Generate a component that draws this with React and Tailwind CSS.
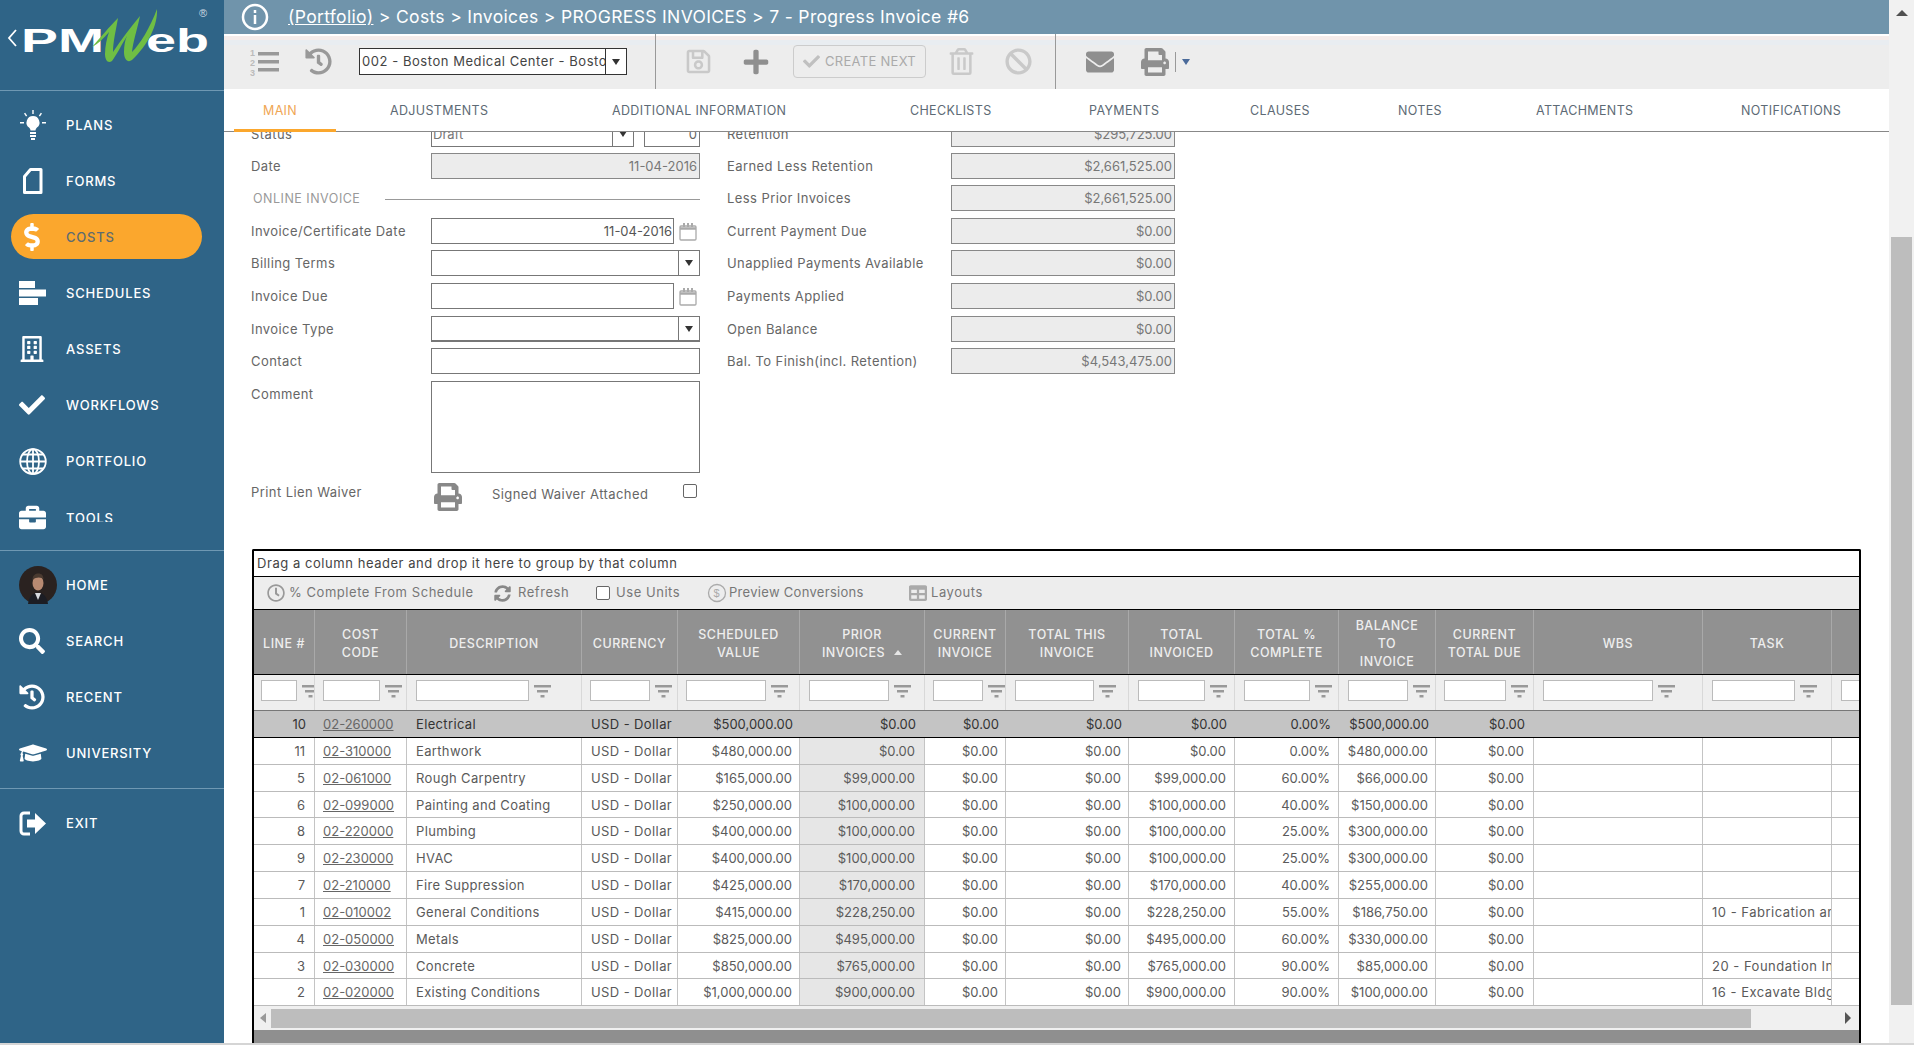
import {
  FaRegBuilding, FaCheck, FaBriefcase, FaSearch, FaHistory, FaGraduationCap, FaPrint, FaEnvelope,
  FaRegSave, FaPlus, FaRegTrashAlt, FaBan, FaRegClock, FaSyncAlt, FaTable, FaDollarSign,
} from 'react-icons/fa'

const COLS = 'grid grid-cols-[61px_92px_175px_96px_122px_125px_81px_123px_106px_104px_97px_98px_169px_129px_29px]'

const NAV = [
  { label: 'PLANS', icon: <Bulb /> },
  { label: 'FORMS', icon: <FormIcon /> },
  { label: 'COSTS', icon: <FaDollarSign size={28} className="text-white ml-[-1px]" />, active: true },
  { label: 'SCHEDULES', icon: <Bars /> },
  { label: 'ASSETS', icon: <FaRegBuilding size={26} /> },
  { label: 'WORKFLOWS', icon: <FaCheck size={26} /> },
  { label: 'PORTFOLIO', icon: <Globe /> },
  { label: 'TOOLS', icon: <FaBriefcase size={27} />, clip: true },
]

const NAV2 = [
  { label: 'HOME', icon: <Avatar /> },
  { label: 'SEARCH', icon: <FaSearch size={26} /> },
  { label: 'RECENT', icon: <FaHistory size={26} /> },
  { label: 'UNIVERSITY', icon: <FaGraduationCap size={28} /> },
]

const TABS = [
  { label: 'MAIN', cls: 'ml-[10px] w-[102px] pl-[29px] border-b-[3px] border-[#fba72d] text-[#f0a654]' },
  { label: 'ADJUSTMENTS', cls: 'ml-[54px] w-[222px]' },
  { label: 'ADDITIONAL INFORMATION', cls: 'w-[298px]' },
  { label: 'CHECKLISTS', cls: 'w-[179px]' },
  { label: 'PAYMENTS', cls: 'w-[161px]' },
  { label: 'CLAUSES', cls: 'w-[148px]' },
  { label: 'NOTES', cls: 'w-[138px]' },
  { label: 'ATTACHMENTS', cls: 'w-[205px]' },
  { label: 'NOTIFICATIONS', cls: 'w-[120px]' },
]

const HEADERS = [
  ['LINE #'], ['COST', 'CODE'], ['DESCRIPTION'], ['CURRENCY'], ['SCHEDULED', 'VALUE'], ['PRIOR', 'INVOICES'],
  ['CURRENT', 'INVOICE'], ['TOTAL THIS', 'INVOICE'], ['TOTAL', 'INVOICED'], ['TOTAL %', 'COMPLETE'],
  ['BALANCE', 'TO', 'INVOICE'], ['CURRENT', 'TOTAL DUE'], ['WBS'], ['TASK'], [],
]

const FILTERS = [
  'pl-[7px] [&>input]:w-[36px]', 'pl-[8px] [&>input]:w-[57px]', 'pl-[9px] [&>input]:w-[113px]', 'pl-[8px] [&>input]:w-[60px]',
  'pl-[8px] [&>input]:w-[80px]', 'pl-[9px] [&>input]:w-[80px]', 'pl-[8px] [&>input]:w-[50px]', 'pl-[9px] [&>input]:w-[79px]',
  'pl-[9px] [&>input]:w-[67px]', 'pl-[9px] [&>input]:w-[66px]', 'pl-[9px] [&>input]:w-[60px]', 'pl-[8px] [&>input]:w-[62px]',
  'pl-[9px] [&>input]:w-[110px]', 'pl-[9px] [&>input]:w-[83px]', 'pl-[9px] [&>input]:w-[40px]',
]

const ROWS = [
  ['10', '02-260000', 'Electrical', '$500,000.00', '$0.00', '$0.00', '0.00%', '$500,000.00', ''],
  ['11', '02-310000', 'Earthwork', '$480,000.00', '$0.00', '$0.00', '0.00%', '$480,000.00', ''],
  ['5', '02-061000', 'Rough Carpentry', '$165,000.00', '$99,000.00', '$99,000.00', '60.00%', '$66,000.00', ''],
  ['6', '02-099000', 'Painting and Coating', '$250,000.00', '$100,000.00', '$100,000.00', '40.00%', '$150,000.00', ''],
  ['8', '02-220000', 'Plumbing', '$400,000.00', '$100,000.00', '$100,000.00', '25.00%', '$300,000.00', ''],
  ['9', '02-230000', 'HVAC', '$400,000.00', '$100,000.00', '$100,000.00', '25.00%', '$300,000.00', ''],
  ['7', '02-210000', 'Fire Suppression', '$425,000.00', '$170,000.00', '$170,000.00', '40.00%', '$255,000.00', ''],
  ['1', '02-010002', 'General Conditions', '$415,000.00', '$228,250.00', '$228,250.00', '55.00%', '$186,750.00', '10 - Fabrication and Erection'],
  ['4', '02-050000', 'Metals', '$825,000.00', '$495,000.00', '$495,000.00', '60.00%', '$330,000.00', ''],
  ['3', '02-030000', 'Concrete', '$850,000.00', '$765,000.00', '$765,000.00', '90.00%', '$85,000.00', '20 - Foundation Installation'],
  ['2', '02-020000', 'Existing Conditions', '$1,000,000.00', '$900,000.00', '$900,000.00', '90.00%', '$100,000.00', '16 - Excavate Bldg Pad'],
]

const LEFT_INPUT = 'h-[26px] border border-[#777] bg-white'
const GREY_INPUT = 'h-[26px] border border-[#888] bg-[#ececec] text-[#777] text-[13px] flex items-center justify-end pr-[2px] pt-[1px]'
const LABEL = 'leading-[27px] text-[13px] tracking-[0.42px] text-[#666] whitespace-nowrap'

function Bulb() {
  return (
    <svg width="28" height="30" viewBox="0 0 28 30" fill="white">
      <path d="M14 6a6.5 6.5 0 0 0-4 11.6c1 .9 1.5 1.8 1.5 3h5c0-1.2.5-2.1 1.5-3A6.5 6.5 0 0 0 14 6z" />
      <rect x="11" y="22" width="6" height="2" /><rect x="11" y="25" width="6" height="2" /><rect x="12" y="28" width="4" height="2" />
      <path d="M1 12h4v1.5H1zM23 12h4v1.5h-4zM13.3 0h1.4v4h-1.4zM5 3.5l1.2-.8 2 3-1.2.8zM23 3.5l-1.2-.8-2 3 1.2.8z" />
    </svg>
  )
}

function FormIcon() {
  return (
    <svg width="28" height="28" viewBox="0 0 28 28" fill="none" stroke="white" strokeWidth="3">
      <path d="M5.5 9.5 11.5 2.5H22v23H5.5z" strokeLinejoin="round" />
    </svg>
  )
}

function Bars() {
  return (
    <svg width="28" height="24" viewBox="0 0 28 24" fill="white">
      <rect x="0" y="0" width="16" height="7" /><rect x="0" y="8.5" width="27" height="7" /><rect x="0" y="17" width="19" height="7" />
    </svg>
  )
}

function Globe() {
  return (
    <svg width="28" height="27" viewBox="0 0 28 27" fill="none" stroke="white" strokeWidth="1.8">
      <ellipse cx="14" cy="13.5" rx="12.8" ry="12.4" />
      <ellipse cx="14" cy="13.5" rx="6" ry="12.4" />
      <path d="M14 1v25M1.5 13.5h25M3.5 6.5h21M3.5 20.5h21" />
    </svg>
  )
}

function ExitIcon() {
  return (
    <svg width="28" height="27" viewBox="0 0 28 27" fill="white">
      <path d="M11 3H5a3 3 0 0 0-3 3v15a3 3 0 0 0 3 3h6" fill="none" stroke="white" strokeWidth="3" />
      <path d="M8 9.5h8V3l11 10.5L16 24v-6.5H8z" />
    </svg>
  )
}

function Avatar() {
  return (
    <svg width="38" height="38" viewBox="0 0 38 38">
      <circle cx="19" cy="19" r="19" fill="#2a2220" />
      <path d="M9 38c1-8 5-11 10-11s9 3 10 11z" fill="#1c1d24" />
      <path d="M16 27l3 7 3-7z" fill="#d9dbe0" />
      <ellipse cx="19" cy="17" rx="5.5" ry="7.5" fill="#b88a72" />
      <path d="M13.500 14c0-5 3-6.500 6-6.500s5 2 5 6c-2-2.500-7-3-11 .5z" fill="#4a3a30" />
    </svg>
  )
}

function Logo() {
  return (
    <svg width="224" height="90" viewBox="0 0 224 90">
      <path d="M16 30 9 38l7 8" fill="none" stroke="white" strokeWidth="1.8" />
      <text x="21" y="52" fill="white" fontFamily="Liberation Sans" fontWeight="700" fontSize="34" textLength="83" lengthAdjust="spacingAndGlyphs">PM</text>
      <text x="146" y="52" fill="white" fontFamily="Liberation Sans" fontWeight="700" fontSize="34" textLength="63" lengthAdjust="spacingAndGlyphs">eb</text>
      <path d="M92 47C100 38 110 26 118 18 116 30 113 42 113 52 121 40 130 28 140 16 137 30 133 42 132 52 140 44 150 28 157 9 158 25 148 45 132 60 128 63 124 60 124 52 124 46 125 40 127 36 122 44 116 56 112 61 108 64 105 60 105 54 105 46 107 38 109 32 104 38 98 44 92 47Z" fill="#6fbe44" />
      <text x="199" y="17" fill="#cfdbe3" fontFamily="Liberation Sans" fontSize="11">®</text>
    </svg>
  )
}

function Caret({ className = '' }) {
  return (
    <svg width="8" height="6" viewBox="0 0 8 6" className={className}><path d="M0 0h8L4 6z" fill="#333" /></svg>
  )
}

function FilterIcon() {
  return (
    <svg width="17" height="14" viewBox="0 0 17 14" fill="#999" className="ml-[5px] mt-[4px] shrink-0">
      <rect x="0" y="1" width="17" height="2.500" /><rect x="3" y="6" width="11" height="2.500" /><rect x="6.500" y="11" width="4" height="2.500" />
    </svg>
  )
}

function Calendar() {
  return (
    <svg width="18" height="19" viewBox="0 0 18 19" fill="none" stroke="#aaa" strokeWidth="1.3" className="ml-[5px] mt-[4px]">
      <rect x="1" y="4" width="16" height="14" rx="1" />
      <path d="M1 6.500h16" strokeWidth="2.500" />
      <path d="M5 1v4M9 1v4M13 1v4" strokeWidth="2" />
    </svg>
  )
}

function SelectBox({ className = '' }) {
  return (
    <div className={`h-[26px] border border-[#777] bg-white flex justify-end ${className}`}>
      <div className="w-[21px] border-l border-[#777] flex items-center justify-center"><Caret /></div>
    </div>
  )
}

function NavItem({ item }) {
  const text = item.active ? 'text-[#5d6b70]' : 'text-white'
  return (
    <div className="h-[56px] flex items-center text-white">
      <div className="w-[66px] pl-[19px] shrink-0 flex items-center">{item.icon}</div>
      <span className={`text-[13px] font-medium tracking-[0.8px] leading-[12px] ${text} ${item.clip ? 'h-[10px] overflow-hidden' : ''}`}>{item.label}</span>
    </div>
  )
}

function Sidebar() {
  return (
    <aside className="w-[224px] shrink-0 bg-[#2f6487] flex flex-col">
      <div className="h-[91px] border-b border-[#6f98b3]"><Logo /></div>
      <div className="h-[459px] pt-[6px] relative">
        {NAV.map((item) => (
          item.active
            ? (
              <div key={item.label} className="relative">
                <div className="absolute left-[11px] top-[5px] w-[191px] h-[45px] rounded-full bg-[#fba72d]" />
                <div className="relative"><NavItem item={item} /></div>
              </div>
            )
            : <NavItem key={item.label} item={item} />
        ))}
      </div>
      <div className="border-t border-[#6f98b3] pt-[6px] pb-[7px]">
        {NAV2.map((item) => <NavItem key={item.label} item={item} />)}
      </div>
      <div className="border-t border-[#6f98b3] pt-[6px]">
        <NavItem item={{ label: 'EXIT', icon: <ExitIcon /> }} />
      </div>
    </aside>
  )
}

function Toolbar() {
  return (
    <div className="h-[55px] shrink-0 bg-[linear-gradient(#fff_2px,#f5ecea_2px,#f5ecea_6px,#e9edf1_6px,#e9edf1_11px,#ededed_11px)] flex items-center text-[#8f8f8f]">
      <svg width="30" height="30" viewBox="0 0 30 30" className="ml-[26px] shrink-0" fill="#999">
        <rect x="8" y="5" width="21" height="3.500" /><rect x="8" y="13" width="21" height="3.500" /><rect x="8" y="21" width="21" height="3.500" />
        <text x="0" y="9" fontSize="9" fontFamily="Liberation Sans" fontWeight="700" fill="#bbb">1</text>
        <text x="0" y="19" fontSize="9" fontFamily="Liberation Sans" fontWeight="700" fill="#bbb">2</text>
        <text x="0" y="29" fontSize="9" fontFamily="Liberation Sans" fontWeight="700" fill="#bbb">3</text>
      </svg>
      <FaHistory size={27} className="ml-[25px] shrink-0 text-[#999]" />
      <div className="ml-[27px] w-[268px] h-[27px] border border-[#333] bg-white flex items-center shrink-0">
        <span className="w-[246px] pl-[2px] overflow-hidden whitespace-nowrap text-[13px] tracking-[0.55px] text-[#444]">002 - Boston Medical Center - Boston</span>
        <div className="w-[21px] h-full border-l border-[#333] flex items-center justify-center"><Caret /></div>
      </div>
      <div className="ml-[28px] w-px self-stretch bg-[#999] shrink-0" />
      <FaRegSave size={27} className="ml-[29px] text-[#c9c9c9] shrink-0" />
      <FaPlus size={28} className="ml-[30px] shrink-0" />
      <div className="ml-[23px] w-[133px] h-[33px] border border-[#ccc] rounded-[4px] flex items-center justify-center gap-[5px] text-[#aaa] text-[13px] tracking-[0.3px] shrink-0">
        <FaCheck size={17} className="text-[#c0c0c0]" />CREATE NEXT
      </div>
      <FaRegTrashAlt size={27} className="ml-[22px] text-[#c9c9c9] shrink-0" />
      <FaBan size={27} className="ml-[30px] text-[#c9c9c9] shrink-0" />
      <div className="ml-[23px] w-px self-stretch bg-[#999] shrink-0" />
      <FaEnvelope size={28} className="ml-[30px] shrink-0" />
      <FaPrint size={28} className="ml-[27px] shrink-0" />
      <div className="ml-[6px] w-px h-[20px] bg-[#999] shrink-0" />
      <Caret className="ml-[6px] [&>path]:fill-[#4a6a9a]" />
    </div>
  )
}

function LeftRow({ label, className = '', children }) {
  return (
    <div className={`flex h-[26px] ${className}`}>
      <span className={`w-[180px] ${LABEL}`}>{label}</span>
      {children}
    </div>
  )
}

function RightRow({ label, value, className = '' }) {
  return (
    <div className={`flex h-[26px] ${className}`}>
      <span className={`w-[224px] ${LABEL}`}>{label}</span>
      <div className={`${GREY_INPUT} w-[224px]`}>{value}</div>
    </div>
  )
}

function Form() {
  return (
    <div className="flex pl-[27px] mt-[-11px] h-[387px]">
      <div className="w-[449px] shrink-0">
        <LeftRow label="Status">
          <div className={`${LEFT_INPUT} w-[203px] text-[13px] text-[#777] flex`}>
            <span className="flex-1 pl-[1px] leading-[24px]">Draft</span>
            <div className="w-[21px] border-l border-[#777] flex items-center justify-center"><Caret /></div>
          </div>
          <div className={`${LEFT_INPUT} w-[56px] ml-[10px] text-[13px] text-[#666] text-right pr-[2px] leading-[24px]`}>0</div>
        </LeftRow>
        <LeftRow label="Date" className="mt-[6px]">
          <div className={`${GREY_INPUT} w-[269px]`}>11-04-2016</div>
        </LeftRow>
        <div className="flex items-center h-[14px] mt-[13px]">
          <span className="w-[134px] pl-[2px] text-[12.500px] tracking-[0.5px] text-[#999]">ONLINE INVOICE</span>
          <div className="w-[315px] h-px bg-[#999]" />
        </div>
        <LeftRow label="Invoice/Certificate Date" className="mt-[12px]">
          <div className={`${LEFT_INPUT} w-[243px] text-[13px] text-[#555] text-right pr-[1px] leading-[24px] border-[#555]`}>11-04-2016</div>
          <Calendar />
        </LeftRow>
        <LeftRow label="Billing Terms" className="mt-[6px]"><SelectBox className="w-[269px]" /></LeftRow>
        <LeftRow label="Invoice Due" className="mt-[7px]">
          <div className={`${LEFT_INPUT} w-[243px]`} /><Calendar />
        </LeftRow>
        <LeftRow label="Invoice Type" className="mt-[7px]"><SelectBox className="w-[269px] border-b-2" /></LeftRow>
        <LeftRow label="Contact" className="mt-[6px]"><div className={`${LEFT_INPUT} w-[269px]`} /></LeftRow>
        <div className="flex mt-[7px] h-[92px]">
          <span className={`w-[180px] ${LABEL}`}>Comment</span>
          <div className="w-[269px] border border-[#777] bg-white" />
        </div>
        <div className="flex mt-[10px] h-[26px] items-start">
          <span className="w-[183px] text-[13px] tracking-[0.42px] text-[#666] leading-[18px]">Print Lien Waiver</span>
          <FaPrint size={28} className="text-[#888]" />
          <span className="ml-[30px] w-[191px] mt-[2px] text-[13px] tracking-[0.42px] text-[#666] leading-[18px] whitespace-nowrap">Signed Waiver Attached</span>
          <div className="w-[14px] h-[14px] mt-[1px] border border-[#666] rounded-[2px] bg-white" />
        </div>
      </div>
      <div className="ml-[27px] w-[448px]">
        <RightRow label="Retention" value="$295,725.00" />
        <RightRow label="Earned Less Retention" value="$2,661,525.00" className="mt-[6px]" />
        <RightRow label="Less Prior Invoices" value="$2,661,525.00" className="mt-[6px]" />
        <RightRow label="Current Payment Due" value="$0.00" className="mt-[7px]" />
        <RightRow label="Unapplied Payments Available" value="$0.00" className="mt-[6px]" />
        <RightRow label="Payments Applied" value="$0.00" className="mt-[7px]" />
        <RightRow label="Open Balance" value="$0.00" className="mt-[7px]" />
        <RightRow label="Bal. To Finish(incl. Retention)" value="$4,543,475.00" className="mt-[6px]" />
      </div>
    </div>
  )
}

function GridTable() {
  return (
    <div className="ml-[28px] mt-[41px] w-[1609px] border-2 border-b-0 border-black rounded-t-[2px] overflow-hidden text-[13px] text-[#5a5a5a]">
      <div className="h-[26px] border-b border-black pl-[3px] leading-[25px] tracking-[0.55px] text-[#444]">Drag a column header and drop it here to group by that column</div>
      <div className="h-[33px] bg-[#ededed] border-b border-black flex items-center text-[#777] tracking-[0.55px] whitespace-nowrap">
        <FaRegClock size={18} className="ml-[13px] mr-[4px] text-[#999] shrink-0" />
        <span className="w-[205px]">% Complete From Schedule</span>
        <FaSyncAlt size={17} className="mr-[7px] text-[#888] shrink-0" />
        <span className="w-[78px]">Refresh</span>
        <div className="w-[14px] h-[14px] mr-[6px] border border-[#666] rounded-[2px] bg-white shrink-0" />
        <span className="w-[91px]">Use Units</span>
        <svg width="20" height="20" viewBox="0 0 20 20" className="mr-[2px] shrink-0" fill="none" stroke="#aaa" strokeWidth="1.300"><circle cx="10" cy="10" r="8.500" /><text x="6.500" y="14" fontSize="11" stroke="none" fill="#aaa" fontFamily="Liberation Sans">$</text></svg>
        <span className="w-[180px] tracking-[0.3px]">Preview Conversions</span>
        <FaTable size={18} className="mr-[4px] text-[#aaa] shrink-0" />
        <span>Layouts</span>
      </div>
      <div className={`${COLS} h-[65px] bg-[#919191] border-b border-black text-[#eeeeee] text-[12.500px] tracking-[0.5px] font-medium`}>
        {HEADERS.map((lines, i) => (
          <div key={i} className={`flex flex-col items-center justify-center pt-[3px] leading-[18px] text-center ${i < 14 ? 'border-r border-[#a9a9a9]' : ''}`}>
            {lines.map((l, j) => (
              <span key={l} className="whitespace-nowrap">
                {l}
                {i === 5 && j === 1 && <span className="inline-block ml-[9px] mb-[2px] w-0 h-0 border-x-[4px] border-x-transparent border-b-[5px] border-b-[#e5e5e5]" />}
              </span>
            ))}
          </div>
        ))}
      </div>
      <div className={`${COLS} h-[36px] bg-[#eeeeee] border-b border-[#777]`}>
        {FILTERS.map((cls, i) => (
          <div key={i} className={`flex items-start pt-[5px] overflow-hidden ${cls} ${i < 14 ? 'border-r border-[#d8d8d8]' : ''}`}>
            <input readOnly className="h-[21px] border border-[#bbb] bg-white shrink-0" />
            <FilterIcon />
          </div>
        ))}
      </div>
      {ROWS.map((r, idx) => {
        const first = idx === 0
        const cell = `whitespace-nowrap overflow-hidden leading-[26px] ${first ? '' : 'border-r border-[#c4c4c4]'}`
        const right = `${cell} text-right`
        return (
          <div key={r[0]} className={`${COLS} h-[26.85px] ${first ? 'bg-[#c4c4c4] border-b border-black text-[#333]' : 'border-b border-[#bbb] bg-white'}`}>
            <div className={`${right} pr-[9px]`}>{r[0]}</div>
            <div className={`${cell} pl-[8px]`}><span className="underline text-[#666]">{r[1]}</span></div>
            <div className={`${cell} pl-[9px] tracking-[0.35px]`}>{r[2]}</div>
            <div className={`${cell} pl-[9px] tracking-[0.4px]`}>USD - Dollar</div>
            <div className={`${right} pr-[7px]`}>{r[3]}</div>
            <div className={`${right} pr-[9px] ${first ? '' : 'bg-[#e6e6e6]'}`}>{first || idx === 1 ? '$0.00' : r[4]}</div>
            <div className={`${right} pr-[7px]`}>$0.00</div>
            <div className={`${right} pr-[7px]`}>$0.00</div>
            <div className={`${right} pr-[8px]`}>{r[5]}</div>
            <div className={`${right} pr-[8px]`}>{r[6]}</div>
            <div className={`${right} pr-[7px]`}>{r[7]}</div>
            <div className={`${right} pr-[9px]`}>$0.00</div>
            <div className={cell} />
            <div className={`${cell} pl-[9px] tracking-[0.5px]`}>{r[8]}</div>
            <div className={cell} />
          </div>
        )
      })}
      <div className="h-[24px] bg-[#f0f0f0] flex items-center">
        <div className="w-[17px] flex justify-center"><div className="w-0 h-0 border-y-[5px] border-y-transparent border-r-[6px] border-r-[#999]" /></div>
        <div className="w-[1480px] h-[19px] bg-[#bdbdbd]" />
        <div className="ml-auto mr-[8px] w-0 h-0 border-y-[6px] border-y-transparent border-l-[6px] border-l-[#555]" />
      </div>
      <div className="h-[13px] bg-[#8f8f8f]" />
    </div>
  )
}

export default function App() {
  return (
    <div className="w-[1914px] h-[1045px] flex flex-col overflow-hidden bg-white font-[Inter,sans-serif]">
      <div className="flex h-[1043px]">
        <Sidebar />
        <main className="w-[1665px] flex flex-col">
          <div className="h-[34px] bg-[#7094ab] flex items-center text-white shrink-0">
            <svg width="28" height="28" viewBox="0 0 28 28" fill="none" stroke="white" className="ml-[17px]">
              <circle cx="14" cy="14" r="12" strokeWidth="2.500" />
              <path d="M14 12v9" strokeWidth="2.500" /><path d="M14 7v3" strokeWidth="2.500" />
            </svg>
            <span className="ml-[19px] text-[17.500px] tracking-[0.34px] whitespace-nowrap"><span className="underline">(Portfolio)</span> &gt; Costs &gt; Invoices &gt; PROGRESS INVOICES &gt; 7 - Progress Invoice #6</span>
          </div>
          <Toolbar />
          <div className="h-[43px] flex border-b border-[#888] text-[12.500px] leading-[43px] tracking-[0.35px] text-[#5d6a75] shrink-0">
            {TABS.map((t) => <div key={t.label} className={`${t.cls} h-[43px] whitespace-nowrap`}>{t.label}</div>)}
          </div>
          <div className="flex-1 overflow-hidden">
            <Form />
            <GridTable />
          </div>
        </main>
        <div className="w-[25px] bg-[#f1f1f1] flex flex-col items-center">
          <div className="mt-[10px] w-0 h-0 border-x-[6px] border-x-transparent border-b-[6px] border-b-[#505050]" />
          <div className="mt-[221px] w-[21px] h-[768px] bg-[#bdbdbd]" />
        </div>
      </div>
      <div className="h-[2px] bg-[#d5d5d5]" />
    </div>
  )
}
